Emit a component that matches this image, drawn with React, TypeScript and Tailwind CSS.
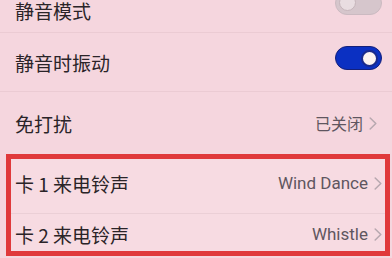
const cn = '"Noto Sans CJK SC", "Noto Sans", sans-serif';

function Toggle({ on, className = '' }: { on: boolean; className?: string }) {
  return (
    <div
      className={`w-[47px] h-[24px] rounded-full flex items-center px-[3px] flex-shrink-0 ${
        on ? 'bg-[#0b30c2] border border-[#14207a] justify-end' : 'bg-[#d6c6cc] border border-[#cbbac1] justify-start'
      } ${className}`}
    >
      <div
        className={`w-[17px] h-[17px] rounded-full ${
          on ? 'bg-[#fbf3f1] border-2 border-[#1a2a8c]' : 'bg-[#e9dde1] border border-[#c6b5bb]'
        }`}
      />
    </div>
  );
}

function Chevron() {
  return (
    <svg className="w-[8px] h-[13px] ml-[6px] text-[#b7a8af]" viewBox="0 0 8 13" fill="none" stroke="currentColor">
      <path d="M1.2 1 L6.8 6.5 L1.2 12" strokeWidth={1.5} strokeLinecap="round" strokeLinejoin="round" />
    </svg>
  );
}

export default function App() {
  return (
    <div className="w-[392px] h-[258px] overflow-hidden bg-[#f5d6de] text-[#2a2428]" style={{ fontFamily: cn }}>
      <div className="-mt-[11px]">
        <div className="h-[44px] flex items-center justify-between pl-[15px] pr-[10px] border-b border-[#ebcbd3]">
          <span className="text-[19px] leading-none">静音模式</span>
          <Toggle on={false} className="mb-[16px]" />
        </div>
        <div className="h-[59px] flex items-center justify-between pl-[15px] pr-[10px] border-b border-[#ebcbd3]">
          <span className="text-[19px] leading-none">静音时振动</span>
          <Toggle on className="mb-[8px]" />
        </div>
        <div className="h-[62px] flex items-center justify-between pl-[15px] pr-[15px]">
          <span className="text-[19px] leading-none">免打扰</span>
          <div className="flex items-center text-[#5f5660]">
            <span className="text-[16px] leading-none">已关闭</span>
            <Chevron />
          </div>
        </div>
        <div className="ml-[6px] w-[384px] border-[5px] border-[#e0393b] bg-[#f7dbe2]">
          <div className="h-[55px] pb-[5px] flex items-center justify-between pl-[4px] pr-[3px] border-b border-[#ebcfd6]">
            <span className="text-[19px] leading-none">卡 1 来电铃声</span>
            <div className="flex items-center text-[#5f5660]">
              <span className="text-[17px] leading-none" style={{ fontFamily: 'Roboto, sans-serif' }}>Wind Dance</span>
              <Chevron />
            </div>
          </div>
          <div className="h-[37px] pt-[3px] flex items-center justify-between pl-[4px] pr-[3px]">
            <span className="text-[19px] leading-none">卡 2 来电铃声</span>
            <div className="flex items-center text-[#5f5660]">
              <span className="text-[17px] leading-none" style={{ fontFamily: 'Roboto, sans-serif' }}>Whistle</span>
              <Chevron />
            </div>
          </div>
        </div>
      </div>
    </div>
  );
}
